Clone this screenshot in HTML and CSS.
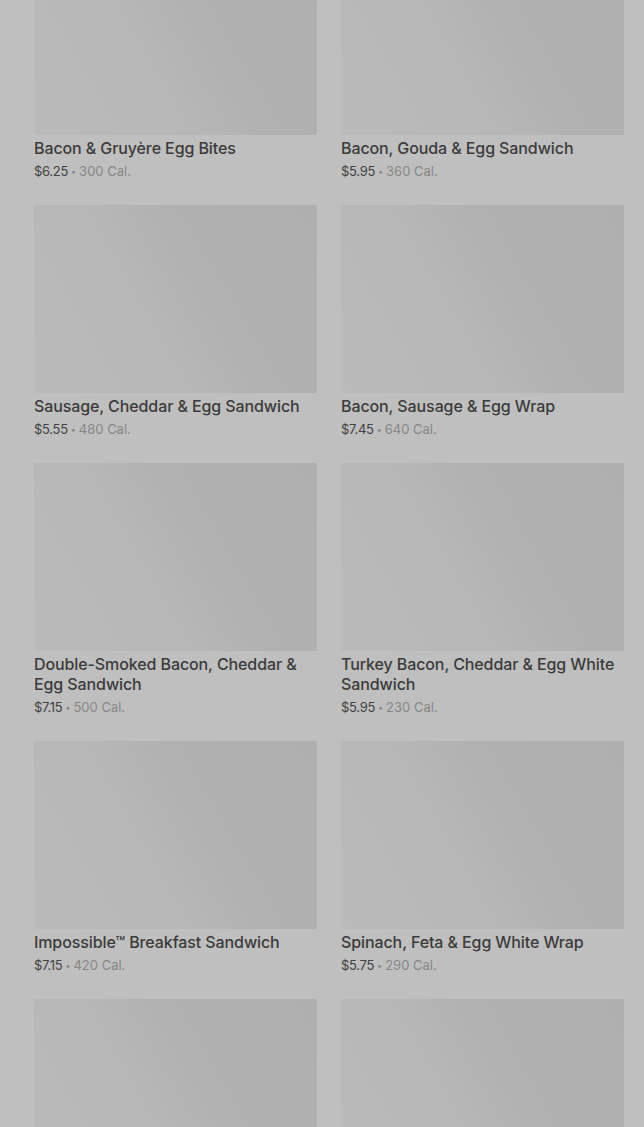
FILE: index.html
```html
<!DOCTYPE html>
<html lang="en">
<head>
    <meta charset="UTF-8">
    <meta name="viewport" content="width=device-width, initial-scale=1.0">
    <title>Breakfast Menu</title>
    <link rel="stylesheet" href="styles.css">
</head>
<body>
    <div class="menu">
        <div class="item">
            <div class="photo"></div>
            <h3>Bacon &amp; Gruyère Egg Bites</h3>
            <p class="meta"><span class="price">$6.25</span><span class="dot">•</span>300 Cal.</p>
        </div>
        <div class="item">
            <div class="photo"></div>
            <h3>Bacon, Gouda &amp; Egg Sandwich</h3>
            <p class="meta"><span class="price">$5.95</span><span class="dot">•</span>360 Cal.</p>
        </div>
        <div class="item">
            <div class="photo"></div>
            <h3>Sausage, Cheddar &amp; Egg Sandwich</h3>
            <p class="meta"><span class="price">$5.55</span><span class="dot">•</span>480 Cal.</p>
        </div>
        <div class="item">
            <div class="photo"></div>
            <h3>Bacon, Sausage &amp; Egg Wrap</h3>
            <p class="meta"><span class="price">$7.45</span><span class="dot">•</span>640 Cal.</p>
        </div>
        <div class="item">
            <div class="photo"></div>
            <h3>Double-Smoked Bacon, Cheddar &amp; Egg Sandwich</h3>
            <p class="meta"><span class="price">$7.15</span><span class="dot">•</span>500 Cal.</p>
        </div>
        <div class="item">
            <div class="photo"></div>
            <h3>Turkey Bacon, Cheddar &amp; Egg White Sandwich</h3>
            <p class="meta"><span class="price">$5.95</span><span class="dot">•</span>230 Cal.</p>
        </div>
        <div class="item">
            <div class="photo"></div>
            <h3>Impossible™ Breakfast Sandwich</h3>
            <p class="meta"><span class="price">$7.15</span><span class="dot">•</span>420 Cal.</p>
        </div>
        <div class="item">
            <div class="photo"></div>
            <h3>Spinach, Feta &amp; Egg White Wrap</h3>
            <p class="meta"><span class="price">$5.75</span><span class="dot">•</span>290 Cal.</p>
        </div>
        <div class="item">
            <div class="photo"></div>
        </div>
        <div class="item">
            <div class="photo"></div>
        </div>
    </div>
</body>
</html>
```

FILE: styles.css
```css
body {
    font-family: Inter, Roboto, 'Liberation Sans', sans-serif;
    margin: 0;
    padding: 0;
    height: 100vh;
    overflow: hidden;
    background: #bfbfbf;
}
.menu {
    display: grid;
    grid-template-columns: repeat(2, 1fr);
    column-gap: 24px;
    row-gap: 24px;
    padding: 0 20px 0 34px;
    margin-top: -53px;
}
.item {
    display: flex;
    flex-direction: column;
}
.photo {
    height: 188px;
    border-radius: 2px;
    background: linear-gradient(60deg, #bababa 0%, #b7b7b7 40%, #b1b1b1 60%, #afafaf 100%);
}
h3 {
    margin: 3px 0 0;
    font-size: 16px;
    line-height: 20px;
    font-weight: 500;
    letter-spacing: -0.1px;
    color: #3b3b3b;
}
.meta {
    margin: 4px 0 0;
    font-size: 13px;
    line-height: 18px;
    color: #878787;
}
.price {
    color: #424242;
    letter-spacing: -0.3px;
}
.dot {
    font-size: 9px;
    margin: 0 3px;
    vertical-align: 1px;
}
```
